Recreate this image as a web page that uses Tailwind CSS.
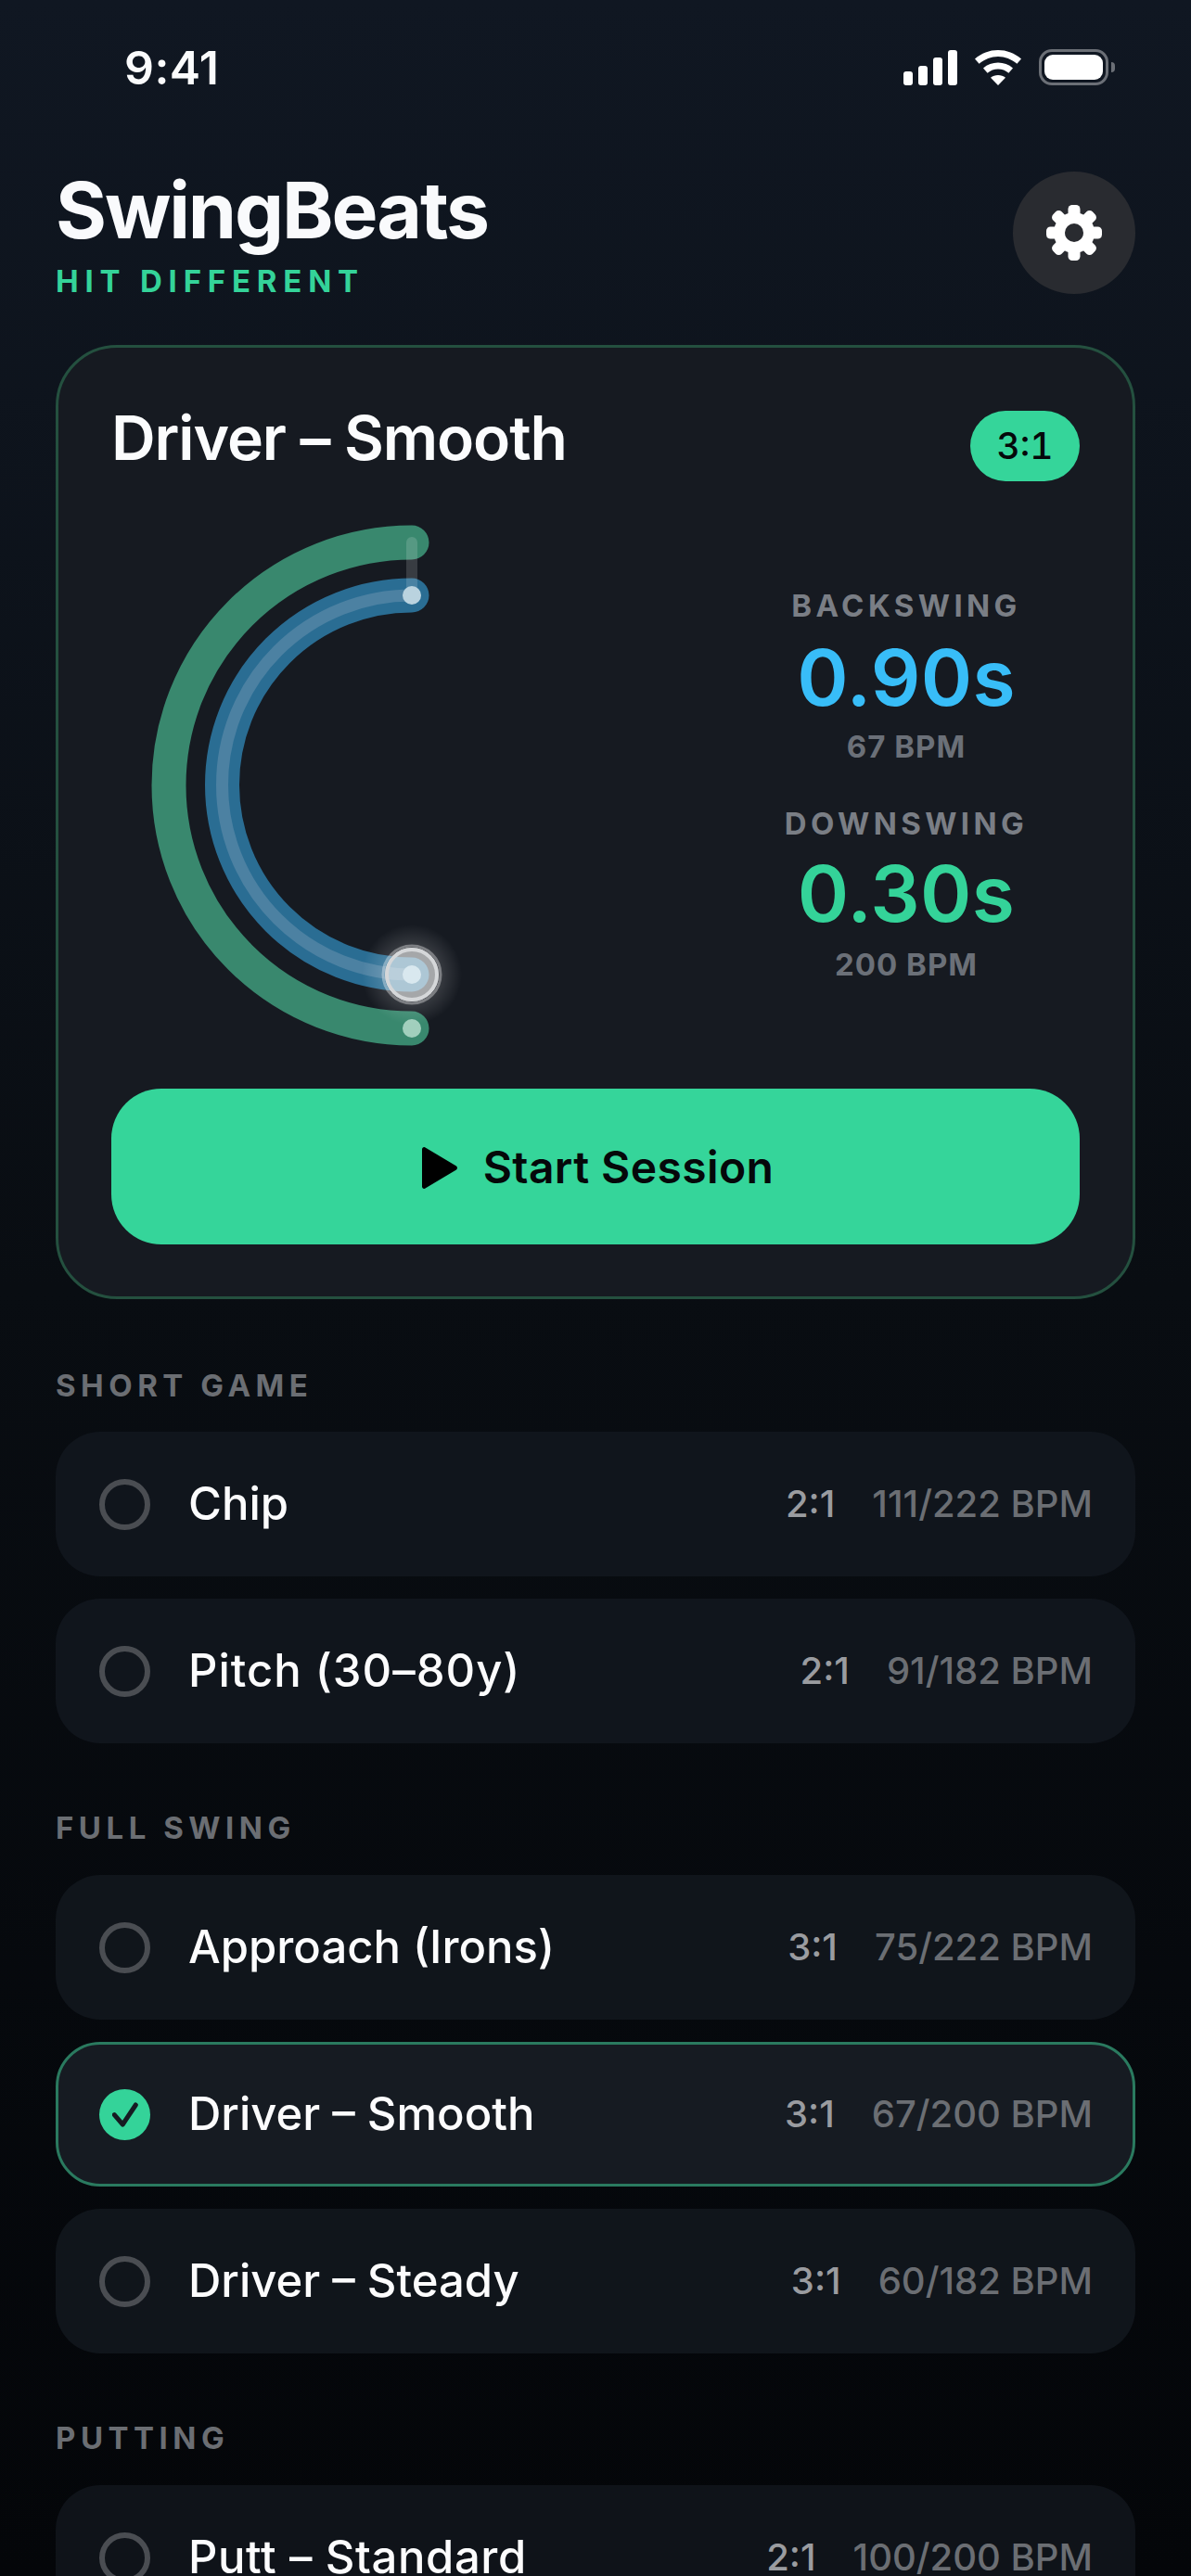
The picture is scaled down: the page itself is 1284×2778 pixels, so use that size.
<!DOCTYPE html>
<html lang="en">
<head>
<meta charset="utf-8">
<title>SwingBeats</title>
<script src="https://cdn.jsdelivr.net/npm/@tailwindcss/browser@4"></script>
</head>
<body class="m-0">
<div class="relative w-[1284px] h-[2778px] overflow-hidden bg-gradient-to-b from-[#101722] via-[#090d12] to-[#040609] font-[Inter,sans-serif] text-white">

  <!-- status bar -->
  <div class="flex items-center justify-between h-[146px] pl-[134px] pr-[82px] pb-[1px]">
    <span class="text-[50px] leading-[60px] font-semibold tracking-[0.4px] text-[#fafbfc]">9:41</span>
    <div class="flex items-center gap-[19px]">
      <svg class="w-[58px] h-[38px]" viewBox="0 0 58 38" fill="#fff">
        <rect x="0" y="23" width="10" height="15" rx="3"/>
        <rect x="16" y="17" width="10" height="21" rx="3"/>
        <rect x="32" y="8" width="10" height="30" rx="3"/>
        <rect x="48" y="0" width="10" height="38" rx="3"/>
      </svg>
      <svg class="w-[50px] h-[38px]" viewBox="0 0 50 38" fill="#fff">
        <path d="M25 0C15.6 0 7.2 3.4 0 9.4l4.600 5.400C10.600 9.800 17.500 7 25 7s14.400 2.800 20.400 7.800L50 9.400C42.800 3.400 34.400 0 25 0z"/>
        <path d="M25 13.500c-6 0-11.500 2.100-16 5.900l4.600 5.300c3.200-2.600 7.100-4.200 11.400-4.200s8.200 1.600 11.400 4.200l4.600-5.300c-4.500-3.800-10-5.900-16-5.900z"/>
        <path d="M25 27c-3 0-5.800 1-8 2.800L25 38l8-8.200C30.800 28 28 27 25 27z"/>
      </svg>
      <div class="flex items-center gap-[3px]">
        <div class="w-[75px] h-[39px] rounded-[14px] border-[3px] border-[#6b6f76] p-[3px]">
          <div class="w-full h-full rounded-[9px] bg-white"></div>
        </div>
        <div class="w-[4px] h-[11px] rounded-r-full bg-[#6b6f76]"></div>
      </div>
    </div>
  </div>

  <div class="px-[60px]">
    <!-- header -->
    <header class="flex items-start justify-between h-[226px]">
      <div class="pt-[35px]">
        <h1 class="text-[84px] leading-[92px] font-bold tracking-[-2.1px] text-[#f9fafc]">SwingBeats</h1>
        <p class="mt-[10px] text-[33px] leading-[40px] font-bold tracking-[6.8px] text-[#34d399]">HIT DIFFERENT</p>
      </div>
      <button class="flex items-center justify-center w-[132px] h-[132px] mt-[39px] rounded-full bg-[#292b30]">
        <svg class="w-[60px] h-[60px]" viewBox="0 0 60 60">
          <g fill="#fff">
            <circle cx="30" cy="30" r="22"/>
            <rect x="23.500" y="0" width="13" height="16" rx="4.500"/>
            <rect x="23.500" y="0" width="13" height="16" rx="4.500" transform="rotate(45 30 30)"/>
            <rect x="23.500" y="0" width="13" height="16" rx="4.500" transform="rotate(90 30 30)"/>
            <rect x="23.500" y="0" width="13" height="16" rx="4.500" transform="rotate(135 30 30)"/>
            <rect x="23.500" y="0" width="13" height="16" rx="4.500" transform="rotate(180 30 30)"/>
            <rect x="23.500" y="0" width="13" height="16" rx="4.500" transform="rotate(225 30 30)"/>
            <rect x="23.500" y="0" width="13" height="16" rx="4.500" transform="rotate(270 30 30)"/>
            <rect x="23.500" y="0" width="13" height="16" rx="4.500" transform="rotate(315 30 30)"/>
          </g>
          <circle cx="30" cy="30" r="10" fill="#292b30"/>
        </svg>
      </button>
    </header>

    <!-- hero card -->
    <section class="h-[1029px] rounded-[66px] border-[3px] border-[#24503f] bg-[#161a21] px-[57px] pt-[57px]">
      <div class="flex items-start justify-between h-[120px]">
        <h2 class="text-[66px] leading-[80px] font-semibold tracking-[-1.1px] text-[#fbfcfd]">Driver – Smooth</h2>
        <span class="mt-[11px] flex items-center justify-center w-[118px] h-[76px] rounded-full bg-[#35d59a] text-[39px] font-medium tabular-nums text-[#05080a]">3:1</span>
      </div>
      <div class="flex items-start justify-between h-[622px]">
        <svg class="w-[340px] h-[565px] ml-[30px] overflow-visible" viewBox="150 552 340 565" fill="none">
          <defs>
            <radialGradient id="glow">
              <stop offset="0.55" stop-color="#ffffff" stop-opacity="0.15"/>
              <stop offset="1" stop-color="#ffffff" stop-opacity="0"/>
            </radialGradient>
          </defs>
          <path d="M444 585 A262 262 0 0 0 444 1109" stroke="#39886e" stroke-width="37" stroke-linecap="round"/>
          <path d="M444 642 A204.500 204.500 0 0 0 444 1051" stroke="#2a6d93" stroke-width="37" stroke-linecap="round"/>
          <path d="M444 642 A204.500 204.500 0 0 0 444 1051" stroke="#4c81a2" stroke-width="13" stroke-linecap="butt"/>
          <rect x="438" y="579" width="12" height="63" rx="6" fill="#ffffff" fill-opacity="0.15"/>
          <circle cx="444" cy="642" r="10" fill="#bad3df"/>
          <circle cx="444" cy="1109" r="10" fill="#a1cfbd"/>
          <circle cx="444" cy="1051" r="54" fill="url(#glow)"/>
          <circle cx="444" cy="1051" r="29" fill="#ffffff" fill-opacity="0.55"/>
          <circle cx="444" cy="1051" r="27" stroke="#d5d7d9" stroke-width="4"/>
          <circle cx="444" cy="1051" r="31" stroke="#ffffff" stroke-opacity="0.35" stroke-width="3"/>
          <circle cx="444" cy="1051" r="10" fill="#d9e8ef"/>
        </svg>
        <div class="flex flex-col items-center w-[260px] mr-[57px] pt-[81px]">
          <p class="text-[33px] leading-[40px] font-bold tracking-[4.4px] text-[#7a7e85] whitespace-nowrap">BACKSWING</p>
          <p class="mt-[12px] text-[84px] leading-[92px] font-semibold tracking-[0.3px] text-[#38bdf8]">0.90s</p>
          <p class="mt-[8px] text-[33px] leading-[40px] font-bold tracking-[1px] text-[#6b7078]">67 BPM</p>
          <p class="mt-[43px] text-[33px] leading-[40px] font-bold tracking-[4.4px] text-[#7a7e85] whitespace-nowrap">DOWNSWING</p>
          <p class="mt-[10px] text-[84px] leading-[92px] font-semibold tracking-[0.3px] text-[#34d399]">0.30s</p>
          <p class="mt-[10px] text-[33px] leading-[40px] font-bold tracking-[1px] text-[#6b7078]">200 BPM</p>
        </div>
      </div>
      <button class="flex items-center justify-center gap-[28px] w-full h-[168px] pl-[5px] pt-[2px] rounded-[54px] bg-[#35d59a] text-[48px] font-semibold tracking-[0.4px] text-[#05080a]">
        <svg class="w-[38px] h-[45px]" viewBox="0 0 38 45" fill="#000"><path d="M0 2.500C0 .4 2.300-.7 3.900.8L37 20.500c1.300 1 1.300 3 0 4L3.900 44.200C2.300 45.700 0 44.600 0 42.500z"/></svg>
        <span>Start Session</span>
      </button>
    </section>

    <!-- lists -->
    <h3 class="mt-[67px] mb-[24px] text-[33px] leading-[52px] font-bold tracking-[5.5px] text-[#6b6e73]">SHORT GAME</h3>
    <div class="flex flex-col gap-[24px]">
      <div class="flex items-center h-[156px] rounded-[48px] bg-[#10151c] pl-[47px] pr-[46px]">
        <span class="w-[55px] h-[55px] shrink-0 rounded-full border-[6px] border-[#4a4d52]"></span>
        <span class="ml-[41px] text-[49px] font-medium text-[#fcfcfd]">Chip</span>
        <span class="ml-auto text-[40px] font-medium text-[#9a9ca0]">2:1</span>
        <span class="ml-[40px] text-[40px] font-medium text-[#6b6e73]">111/222 BPM</span>
      </div>
      <div class="flex items-center h-[156px] rounded-[48px] bg-[#10151c] pl-[47px] pr-[46px]">
        <span class="w-[55px] h-[55px] shrink-0 rounded-full border-[6px] border-[#4a4d52]"></span>
        <span class="ml-[41px] text-[49px] font-medium tracking-[1px] text-[#fcfcfd]">Pitch (30–80y)</span>
        <span class="ml-auto text-[40px] font-medium text-[#9a9ca0]">2:1</span>
        <span class="ml-[40px] text-[40px] font-medium text-[#6b6e73]">91/182 BPM</span>
      </div>
    </div>

    <h3 class="mt-[65px] mb-[25px] text-[33px] leading-[52px] font-bold tracking-[5.5px] text-[#6b6e73]">FULL SWING</h3>
    <div class="flex flex-col gap-[24px]">
      <div class="flex items-center h-[156px] rounded-[48px] bg-[#10151b] pl-[47px] pr-[46px]">
        <span class="w-[55px] h-[55px] shrink-0 rounded-full border-[6px] border-[#4a4d52]"></span>
        <span class="ml-[41px] text-[49px] font-medium text-[#fcfcfd]">Approach (Irons)</span>
        <span class="ml-auto text-[40px] font-medium text-[#9a9ca0]">3:1</span>
        <span class="ml-[40px] text-[40px] font-medium text-[#6b6e73]">75/222 BPM</span>
      </div>
      <div class="flex items-center h-[156px] rounded-[48px] border-[3px] border-[#2a7a5f] bg-[#161b22] pl-[44px] pr-[43px]">
        <span class="flex items-center justify-center w-[55px] h-[55px] shrink-0 rounded-full bg-[#34d399]">
          <svg class="w-[28px] h-[28px]" viewBox="0 0 28 28" fill="none"><path d="M2.300 14.700L11.300 25L25.300 4" stroke="#161b22" stroke-width="5" stroke-linecap="round" stroke-linejoin="round"/></svg>
        </span>
        <span class="ml-[41px] text-[49px] font-medium text-[#fcfcfd]">Driver – Smooth</span>
        <span class="ml-auto text-[40px] font-medium text-[#9a9ca0]">3:1</span>
        <span class="ml-[40px] text-[40px] font-medium text-[#6b6e73]">67/200 BPM</span>
      </div>
      <div class="flex items-center h-[156px] rounded-[48px] bg-[#10151b] pl-[47px] pr-[46px]">
        <span class="w-[55px] h-[55px] shrink-0 rounded-full border-[6px] border-[#4a4d52]"></span>
        <span class="ml-[41px] text-[49px] font-medium text-[#fcfcfd]">Driver – Steady</span>
        <span class="ml-auto text-[40px] font-medium text-[#9a9ca0]">3:1</span>
        <span class="ml-[40px] text-[40px] font-medium text-[#6b6e73]">60/182 BPM</span>
      </div>
    </div>

    <h3 class="mt-[65px] mb-[25px] text-[33px] leading-[52px] font-bold tracking-[5.5px] text-[#6b6e73]">PUTTING</h3>
    <div class="flex flex-col gap-[24px]">
      <div class="flex items-center h-[156px] rounded-[48px] bg-[#0f1319] pl-[47px] pr-[46px]">
        <span class="w-[55px] h-[55px] shrink-0 rounded-full border-[6px] border-[#4a4d52]"></span>
        <span class="ml-[41px] text-[49px] font-medium tracking-[0.6px] text-[#fcfcfd]">Putt – Standard</span>
        <span class="ml-auto text-[40px] font-medium text-[#9a9ca0]">2:1</span>
        <span class="ml-[40px] text-[40px] font-medium text-[#6b6e73]">100/200 BPM</span>
      </div>
    </div>
  </div>
</div>
</body>
</html>
